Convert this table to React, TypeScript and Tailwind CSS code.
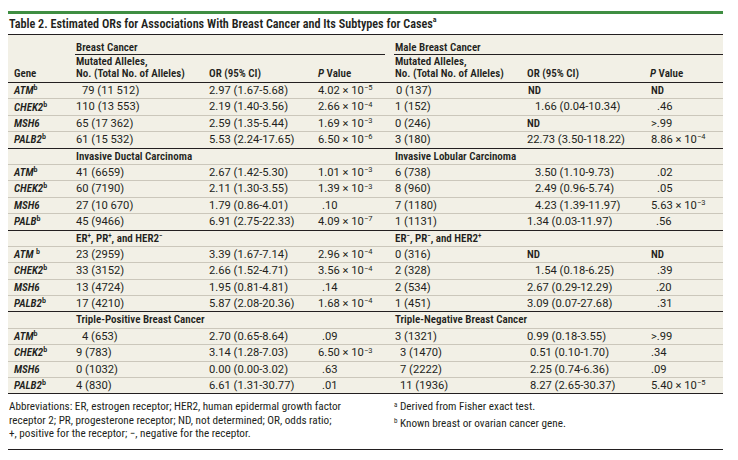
import React from "react";

type Cell = { t: React.ReactNode; c?: string };
type Row = { gene: string; sup?: string; cells: Cell[]; last?: boolean };
type Section = { left: React.ReactNode; right: React.ReactNode; rows: Row[] };

const exp = (v: string, e: string) => (
  <>
    {v} × 10<sup className="text-[7.5px]">{e}</sup>
  </>
);

const ND = <span className="font-['Roboto_Condensed',sans-serif] text-[11px] font-semibold">ND</span>;

const sections: Section[] = [
  {
    left: null,
    right: null,
    rows: [
      {
        gene: "ATM",
        sup: "b",
        cells: [
          { t: "79 (11 512)", c: "pl-[7px]" },
          { t: "2.97 (1.67-5.68)" },
          { t: exp("4.02", "−5") },
          { t: "0 (137)", c: "pl-[2px]" },
          { t: ND, c: "pl-[1px]" },
          { t: ND, c: "pl-[1px]" },
        ],
      },
      {
        gene: "CHEK2",
        sup: "b",
        cells: [
          { t: "110 (13 553)", c: "pl-[1px]" },
          { t: "2.19 (1.40-3.56)" },
          { t: exp("2.66", "−4") },
          { t: "1 (152)", c: "pl-[1px]" },
          { t: "1.66 (0.04-10.34)", c: "pl-[8px]" },
          { t: ".46", c: "pl-[7px]" },
        ],
      },
      {
        gene: "MSH6",
        cells: [
          { t: "65 (17 362)", c: "pl-[1px]" },
          { t: "2.59 (1.35-5.44)" },
          { t: exp("1.69", "−3") },
          { t: "0 (246)", c: "pl-[1px]" },
          { t: ND },
          { t: ">.99", c: "pl-[1px]" },
        ],
      },
      {
        gene: "PALB2",
        sup: "b",
        last: true,
        cells: [
          { t: "61 (15 532)", c: "pl-[1px]" },
          { t: "5.53 (2.24-17.65)" },
          { t: exp("6.50", "−6") },
          { t: "3 (180)", c: "pl-[1px]" },
          { t: "22.73 (3.50-118.22)" },
          { t: exp("8.86", "−4"), c: "pl-[1px]" },
        ],
      },
    ],
  },
  {
    left: "Invasive Ductal Carcinoma",
    right: "Invasive Lobular Carcinoma",
    rows: [
      {
        gene: "ATM",
        sup: "b",
        cells: [
          { t: "41 (6659)", c: "pl-[1px]" },
          { t: "2.67 (1.42-5.30)" },
          { t: exp("1.01", "−3") },
          { t: "6 (738)", c: "pl-[1px]" },
          { t: "3.50 (1.10-9.73)", c: "pl-[8px]" },
          { t: ".02", c: "pl-[7px]" },
        ],
      },
      {
        gene: "CHEK2",
        sup: "b",
        cells: [
          { t: "60 (7190)", c: "pl-[1px]" },
          { t: "2.11 (1.30-3.55)" },
          { t: exp("1.39", "−3") },
          { t: "8 (960)", c: "pl-[1px]" },
          { t: "2.49 (0.96-5.74)", c: "pl-[8px]" },
          { t: ".05", c: "pl-[7px]" },
        ],
      },
      {
        gene: "MSH6",
        cells: [
          { t: "27 (10 670)", c: "pl-[1px]" },
          { t: "1.79 (0.86-4.01)" },
          { t: ".10", c: "pl-[4px]" },
          { t: "7 (1180)", c: "pl-[1px]" },
          { t: "4.23 (1.39-11.97)", c: "pl-[8px]" },
          { t: exp("5.63", "−3"), c: "pl-[1px]" },
        ],
      },
      {
        gene: "PALB",
        sup: "b",
        last: true,
        cells: [
          { t: "45 (9466)", c: "pl-[1px]" },
          { t: "6.91 (2.75-22.33)" },
          { t: exp("4.09", "−7") },
          { t: "1 (1131)", c: "pl-[1px]" },
          { t: "1.34 (0.03-11.97)" },
          { t: ".56", c: "pl-[6px]" },
        ],
      },
    ],
  },
  {
    left: (
      <>
        ER<sup className="text-[7px]">+</sup>, PR<sup className="text-[7px]">+</sup>, and HER2<sup className="text-[7px]">−</sup>
      </>
    ),
    right: (
      <>
        ER<sup className="text-[7px]">−</sup>, PR<sup className="text-[7px]">−</sup>, and HER2<sup className="text-[7px]">+</sup>
      </>
    ),
    rows: [
      {
        gene: "ATM ",
        sup: "b",
        cells: [
          { t: "23 (2959)", c: "pl-[1px]" },
          { t: "3.39 (1.67-7.14)" },
          { t: exp("2.96", "−4") },
          { t: "0 (316)", c: "pl-[1px]" },
          { t: ND },
          { t: ND, c: "pl-[1px]" },
        ],
      },
      {
        gene: "CHEK2",
        sup: "b",
        cells: [
          { t: "33 (3152)", c: "pl-[1px]" },
          { t: "2.66 (1.52-4.71)" },
          { t: exp("3.56", "−4") },
          { t: "2 (328)", c: "pl-[1px]" },
          { t: "1.54 (0.18-6.25)", c: "pl-[8px]" },
          { t: ".39", c: "pl-[7px]" },
        ],
      },
      {
        gene: "MSH6",
        cells: [
          { t: "13 (4724)", c: "pl-[1px]" },
          { t: "1.95 (0.81-4.81)" },
          { t: ".14", c: "pl-[4px]" },
          { t: "2 (534)", c: "pl-[1px]" },
          { t: "2.67 (0.29-12.29)" },
          { t: ".20", c: "pl-[6px]" },
        ],
      },
      {
        gene: "PALB2",
        sup: "b",
        last: true,
        cells: [
          { t: "17 (4210)", c: "pl-[1px]" },
          { t: "5.87 (2.08-20.36)" },
          { t: exp("1.68", "−4") },
          { t: "1 (451)", c: "pl-[1px]" },
          { t: "3.09 (0.07-27.68)" },
          { t: ".31", c: "pl-[7px]" },
        ],
      },
    ],
  },
  {
    left: "Triple-Positive Breast Cancer",
    right: "Triple-Negative Breast Cancer",
    rows: [
      {
        gene: "ATM",
        sup: "b",
        cells: [
          { t: "4 (653)", c: "pl-[7px]" },
          { t: "2.70 (0.65-8.64)" },
          { t: ".09", c: "pl-[4px]" },
          { t: "3 (1321)", c: "pl-[1px]" },
          { t: "0.99 (0.18-3.55)" },
          { t: ">.99", c: "pl-[1px]" },
        ],
      },
      {
        gene: "CHEK2",
        sup: "b",
        cells: [
          { t: "9 (783)", c: "pl-[1px]" },
          { t: "3.14 (1.28-7.03)" },
          { t: exp("6.50", "−3") },
          { t: "3 (1470)", c: "pl-[6px]" },
          { t: "0.51 (0.10-1.70)", c: "pl-[3px]" },
          { t: ".34", c: "pl-[1px]" },
        ],
      },
      {
        gene: "MSH6",
        cells: [
          { t: "0 (1032)", c: "pl-[1px]" },
          { t: "0.00 (0.00-3.02)" },
          { t: ".63", c: "pl-[4px]" },
          { t: "7 (2222)", c: "pl-[6px]" },
          { t: "2.25 (0.74-6.36)", c: "pl-[3px]" },
          { t: ".09", c: "pl-[1px]" },
        ],
      },
      {
        gene: "PALB2",
        sup: "b",
        last: true,
        cells: [
          { t: "4 (830)", c: "pl-[1px]" },
          { t: "6.61 (1.31-30.77)" },
          { t: ".01", c: "pl-[4px]" },
          { t: "11 (1936)", c: "pl-[6px]" },
          { t: "8.27 (2.65-30.37)", c: "pl-[3px]" },
          { t: exp("5.40", "−5"), c: "pl-[1px]" },
        ],
      },
    ],
  },
];

const grid = "grid grid-cols-[67px_134px_109px_76px_133px_123px_73px]";

function DataRow({ r }: { r: Row }) {
  return (
    <div
      className={`${grid} box-border h-[16.4px] items-center border-b ${
        r.last ? "border-[#231f20]" : "border-[#cbc7bb]"
      }`}
    >
      <div className="whitespace-pre pl-[6px] font-semibold italic">
        {r.gene}
        {r.sup && <sup className="text-[8px] not-italic">{r.sup}</sup>}
      </div>
      {r.cells.map((c, i) => (
        <div key={i} className={`whitespace-nowrap font-['Roboto',sans-serif] text-[11.2px] ${c.c ?? ""}`}>
          {c.t}
        </div>
      ))}
    </div>
  );
}

function LabelRow({ left, right }: { left: React.ReactNode; right: React.ReactNode }) {
  return (
    <div className={`${grid} box-border h-[16.4px] items-center border-b border-[#cbc7bb] font-semibold`}>
      <div />
      <div className="col-span-3 pl-[1px]">{left}</div>
      <div className="col-span-3 pl-[1px]">{right}</div>
    </div>
  );
}

function GroupHeader({ title, cols }: { title: string; cols: string }) {
  return (
    <div className="flex flex-col">
      <div className="box-border flex h-[20px] items-end border-b border-[#231f20] pl-[1px] leading-[13px]">
        {title}
      </div>
      <div className={`grid ${cols} h-[27px] items-end pb-[2px] leading-[12px]`}>
        <div className="pl-[1px]">
          Mutated Alleles,
          <br />
          No. (Total No. of Alleles)
        </div>
        <div>OR (95% CI)</div>
        <div>
          <span className="italic">P</span> Value
        </div>
      </div>
    </div>
  );
}

export default function App() {
  return (
    <div className="min-h-[460px] w-[738px] bg-white pl-[8px] pt-[11px] font-['Roboto_Condensed','Roboto',sans-serif] text-[11px] text-[#231f20]">
      <div className="w-[715px]">
        <div className="h-[3px] bg-[#3f8e42]" />
        <div className="box-border flex h-[21px] items-center border-b border-[#231f20] pl-[1px] text-[12.2px] font-semibold">
          Table 2. Estimated ORs for Associations With Breast Cancer and Its Subtypes for Cases
          <sup className="text-[8px]">a</sup>
        </div>
        <div className="bg-[#f2f0e6]">
          <div className="box-border flex border-b border-[#231f20] font-semibold">
            <div className="flex w-[67px] items-end pb-[2px] pl-[6px] leading-[12px]">Gene</div>
            <div className="w-[310px]">
              <GroupHeader title="Breast Cancer" cols="grid-cols-[134px_109px_67px]" />
            </div>
            <div className="w-[9px]" />
            <div className="w-[329px]">
              <GroupHeader title="Male Breast Cancer" cols="grid-cols-[133px_123px_73px]" />
            </div>
          </div>
          {sections.map((s, si) => (
            <React.Fragment key={si}>
              {s.left !== null && <LabelRow left={s.left} right={s.right} />}
              {s.rows.map((r, ri) => (
                <DataRow key={ri} r={r} />
              ))}
            </React.Fragment>
          ))}
        </div>
        <div className="box-border flex h-[56px] border-b border-[#231f20] pt-[6px] text-[11.2px] leading-[13.5px]">
          <div className="w-[386px] pl-[1px]">
            Abbreviations: ER, estrogen receptor; HER2, human epidermal growth factor
            <br />
            receptor 2; PR, progesterone receptor; ND, not determined; OR, odds ratio;
            <br />
            +, positive for the receptor; −, negative for the receptor.
          </div>
          <div className="flex flex-col gap-[3px]">
            <div>
              <sup className="text-[7px]">a</sup> Derived from Fisher exact test.
            </div>
            <div>
              <sup className="text-[7px]">b</sup> Known breast or ovarian cancer gene.
            </div>
          </div>
        </div>
      </div>
    </div>
  );
}
